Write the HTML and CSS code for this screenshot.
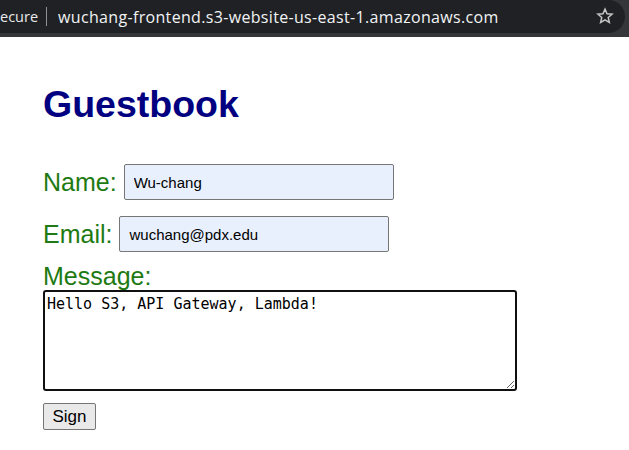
FILE: index.html
```html
<!DOCTYPE html>
<html lang="en">
<head>
<meta charset="utf-8">
<title>Guestbook</title>
<link rel="stylesheet" href="styles.css">
</head>
<body>
<div class="toolbar">
  <div class="omnibox">
    <span class="security">ecure</span>
    <span class="sep"></span>
    <span class="url">wuchang-frontend.s3-website-us-east-1.amazonaws.com</span>
    <svg class="star" width="18" height="18" viewBox="0 0 24 24"><path d="M12 2.8l2.7 6.2 6.7.6-5.1 4.4 1.5 6.6L12 17.1l-5.8 3.5 1.5-6.6-5.1-4.4 6.7-.6z" fill="none" stroke="#c4c7c5" stroke-width="2" stroke-linejoin="miter"/></svg>
  </div>
</div>
<main class="page">
  <h1 class="title">Guestbook</h1>
  <form class="form">
    <div class="row">
      <label class="label" for="name">Name:</label>
      <input class="field" id="name" type="text" value="Wu-chang">
    </div>
    <div class="row row-email">
      <label class="label" for="email">Email:</label>
      <input class="field" id="email" type="text" value="wuchang@pdx.edu">
    </div>
    <label class="label label-msg" for="message">Message:</label>
    <textarea class="message" id="message" spellcheck="false">Hello S3, API Gateway, Lambda!</textarea>
    <button class="sign" type="button">Sign</button>
  </form>
</main>
</body>
</html>
```
FILE: styles.css
```css
html, body {
  margin: 0;
  padding: 0;
  background: #ffffff;
}

.toolbar {
  height: 37px;
  background: #35363a;
  padding-right: 4px;
  box-sizing: border-box;
}

.omnibox {
  height: 33px;
  background: #202124;
  border-radius: 0 17px 17px 0;
  display: flex;
  align-items: center;
  font-family: "Open Sans", "Noto Sans", sans-serif;
  font-size: 16px;
  color: #e8eaed;
  position: relative;
}

.security {
  margin-left: 0;
  font-size: 14.5px;
  color: #e8eaed;
}

.sep {
  width: 1px;
  height: 19px;
  background: #8e9196;
  margin: 0 11px 0 8px;
}

.url {
  color: #f1f3f4;
  letter-spacing: 0.33px;
}

.star {
  position: absolute;
  left: 596px;
  top: 7px;
}

.page {
  padding-left: 43px;
}

.title {
  margin: 46px 0 0 0;
  font-family: "Liberation Sans", Arial, sans-serif;
  font-size: 37.5px;
  line-height: 42px;
  font-weight: bold;
  color: #000080;
}

.form {
  display: flex;
  flex-direction: column;
  align-items: flex-start;
  margin-top: 39px;
}

.row {
  display: flex;
  align-items: center;
  gap: 7px;
}

.row-email {
  margin-top: 16px;
}

.label {
  font-family: "Liberation Sans", Arial, sans-serif;
  font-size: 25px;
  line-height: 28px;
  color: #1e7a12;
}

.label-msg {
  margin-top: 10px;
}

.field {
  width: 270px;
  height: 36px;
  box-sizing: border-box;
  margin: 0;
  padding: 0 9px;
  border: 1px solid #767676;
  border-radius: 2px;
  background: #e8f0fe;
  font-family: "Liberation Sans", Arial, sans-serif;
  font-size: 15px;
  color: #000000;
}

.message {
  display: block;
  width: 474px;
  height: 101px;
  box-sizing: border-box;
  margin: 0;
  padding: 3px 2px;
  border: 2px solid #101010;
  border-radius: 3px;
  outline: none;
  font-family: "DejaVu Sans Mono", monospace;
  font-size: 15px;
  line-height: 18px;
  color: #000000;
  background: #ffffff;
}

.sign {
  margin-top: 12px;
  width: 53px;
  height: 27px;
  padding: 0;
  border: 1px solid #767676;
  border-radius: 2px;
  background: #e9e9e9;
  font-family: "Liberation Sans", Arial, sans-serif;
  font-size: 17px;
  color: #000000;
}
```
